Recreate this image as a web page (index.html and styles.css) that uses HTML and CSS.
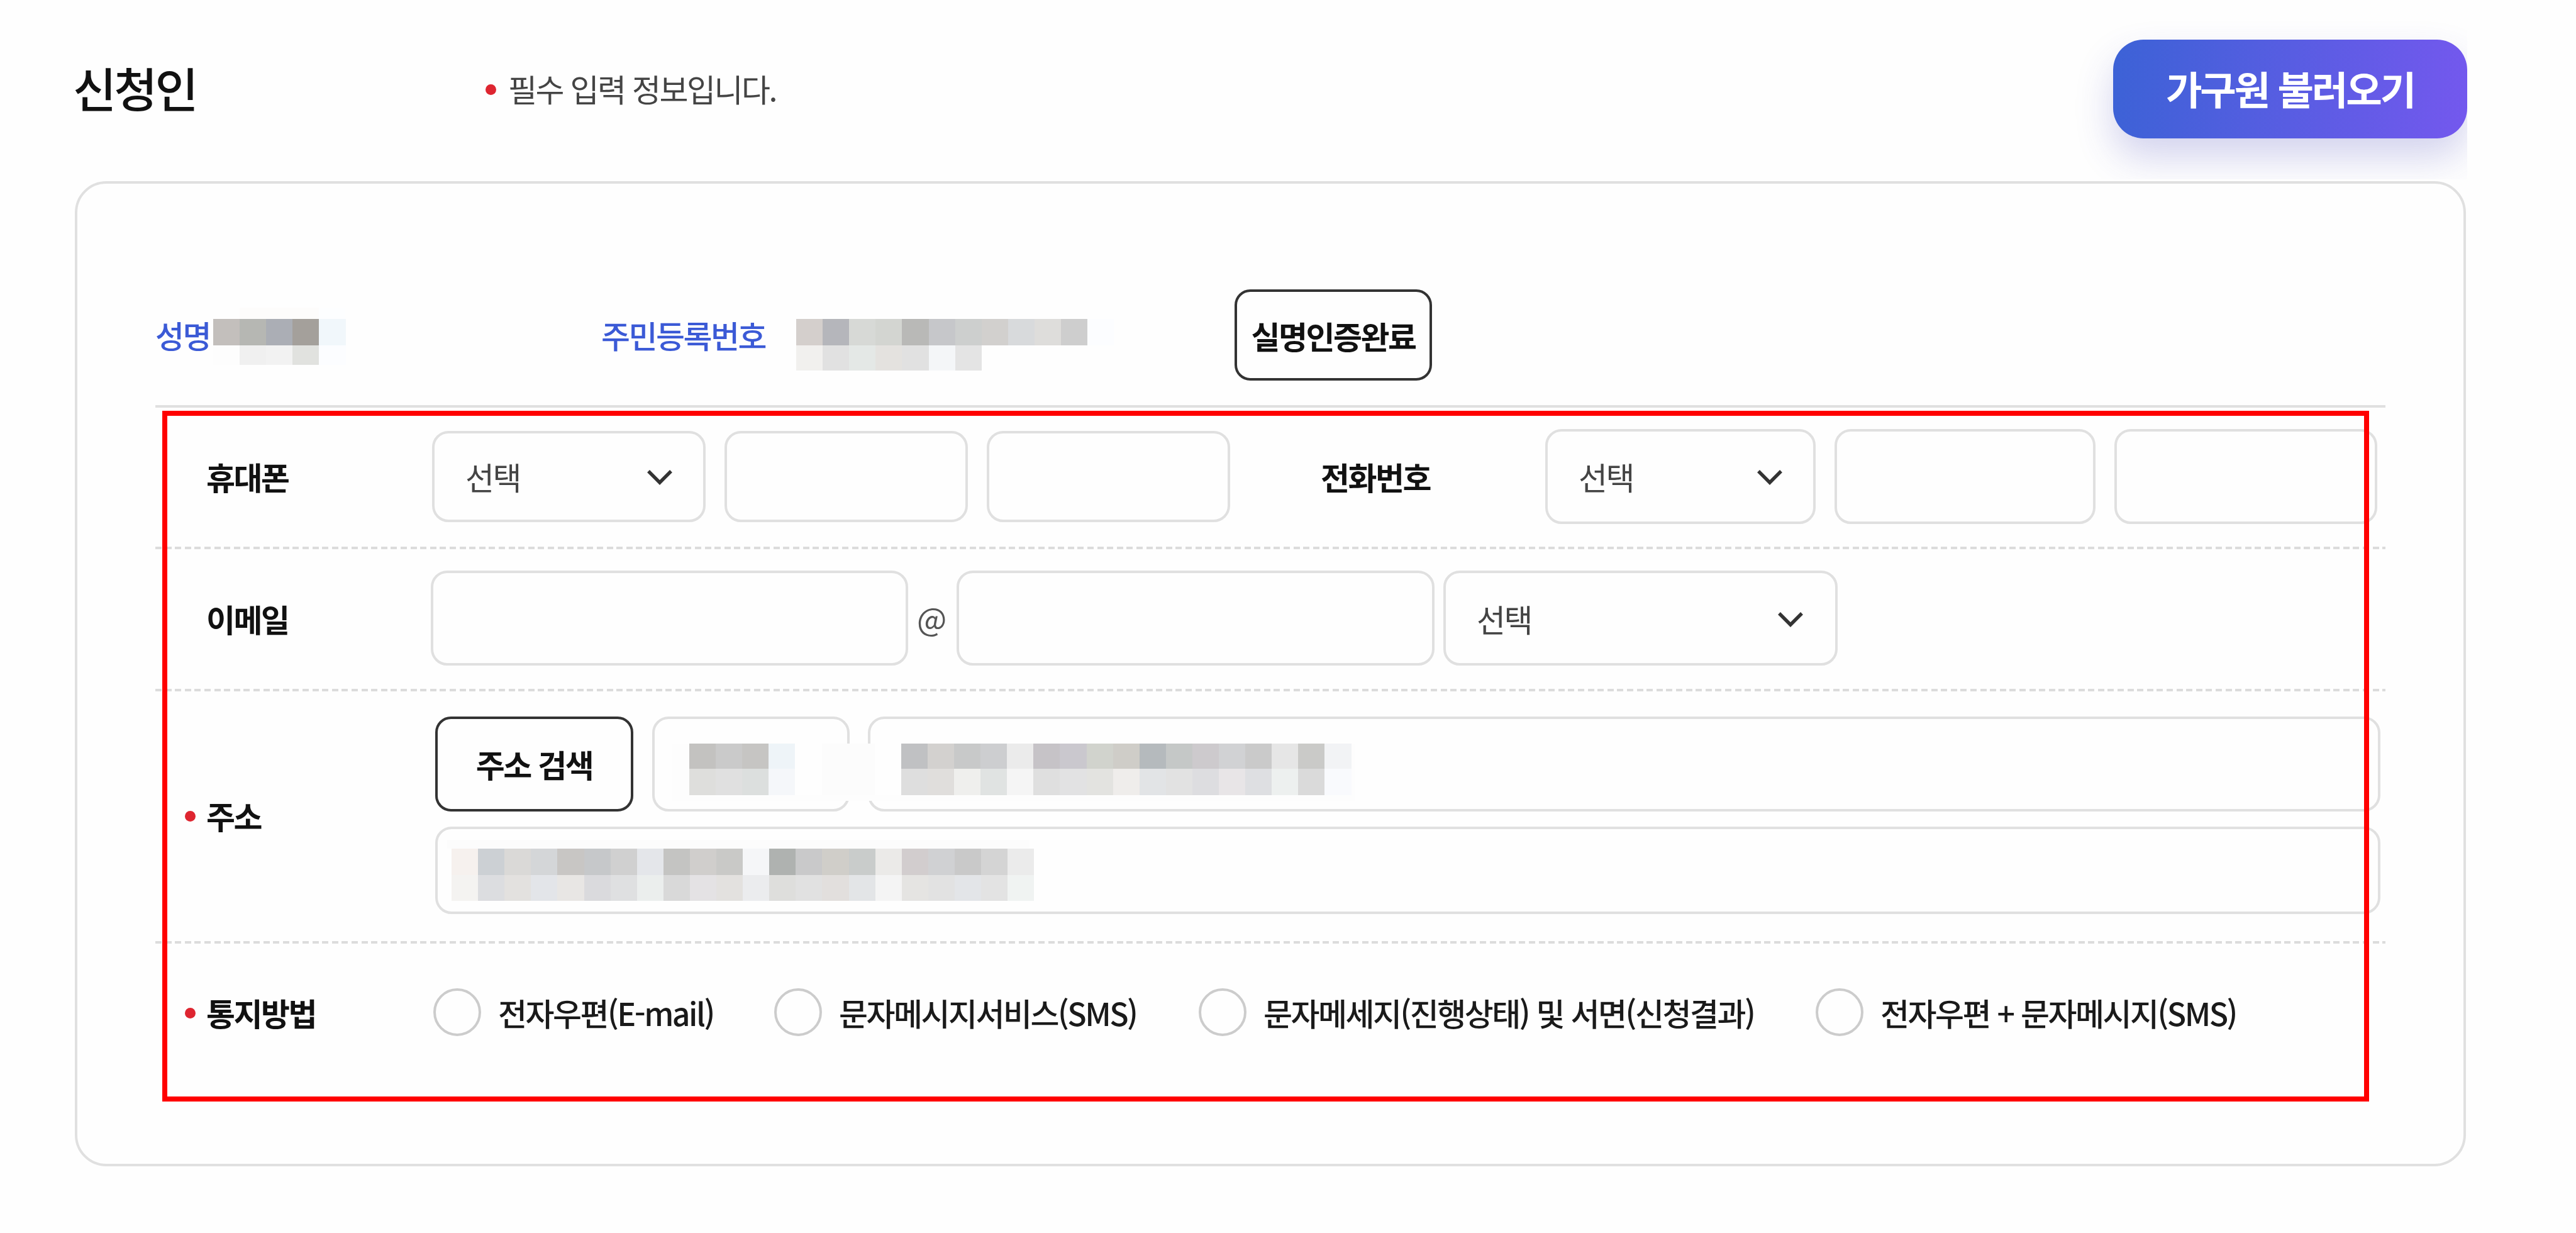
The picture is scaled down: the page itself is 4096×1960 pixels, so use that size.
FILE: index.html
```html
<!DOCTYPE html>
<html lang="ko">
<head>
    <meta charset="UTF-8">
    <meta name="viewport" content="width=device-width, initial-scale=1.0">
    <title>신청인</title>
    <link rel="stylesheet" href="styles.css">
</head>
<body>
    <header class="header">
        <h1>신청인</h1>
        <p class="notice">필수 입력 정보입니다.</p>
        <button class="load-button" type="button">가구원 불러오기</button>
    </header>

    <main class="card">
        <div class="row identity">
            <div class="name-cell">성명<svg class="mosaic" data-mosaic="name"></svg></div>
            <div class="id-cell">주민등록번호<svg class="mosaic" data-mosaic="id"></svg></div>
            <button class="line-button" type="button">실명인증완료</button>
        </div>

        <div class="row phone">
            <div class="label">휴대폰</div>
            <div class="fields mobile">
                <div class="box select">선택<svg class="chevron" viewBox="0 0 44 28"><path d="M4 4l18 18L40 4"/></svg></div>
                <div class="box"></div>
                <div class="box"></div>
            </div>
            <div class="label tel-label">전화번호</div>
            <div class="fields tel">
                <div class="box select">선택<svg class="chevron" viewBox="0 0 44 28"><path d="M4 4l18 18L40 4"/></svg></div>
                <div class="box"></div>
                <div class="box"></div>
            </div>
        </div>

        <div class="row email">
            <div class="label">이메일</div>
            <div class="fields mail">
                <div class="box"></div>
                <span class="at">@</span>
                <div class="box"></div>
                <div class="box select">선택<svg class="chevron" viewBox="0 0 44 28"><path d="M4 4l18 18L40 4"/></svg></div>
            </div>
        </div>

        <div class="row address">
            <div class="label required">주소</div>
            <div class="address-fields">
                <div class="fields address-line">
                    <button class="line-button" type="button">주소 검색</button>
                    <div class="box"></div>
                    <div class="box"></div>
                    <svg class="mosaic" data-mosaic="address"></svg>
                </div>
                <div class="box detail"><svg class="mosaic" data-mosaic="detail"></svg></div>
            </div>
        </div>

        <div class="row notify">
            <div class="label required">통지방법</div>
            <div class="radios">
                <label class="radio"><span class="circle"></span>전자우편(E-mail)</label>
                <label class="radio"><span class="circle"></span>문자메시지서비스(SMS)</label>
                <label class="radio"><span class="circle"></span>문자메세지(진행상태) 및 서면(신청결과)</label>
                <label class="radio"><span class="circle"></span>전자우편 + 문자메시지(SMS)</label>
            </div>
        </div>

        <div class="highlight"></div>
    </main>

    <script src="mosaic.js"></script>
</body>
</html>
```
FILE: styles.css
```css
* {
    box-sizing: border-box;
}
body {
    margin: 0;
    background: #fefefe;
    color: #111;
    font-family: "Noto Sans CJK KR", "Noto Sans", sans-serif;
    font-size: 50px;
    line-height: 72px;
    letter-spacing: -2.5px;
    white-space: nowrap;
}
button {
    font: inherit;
    letter-spacing: inherit;
    padding: 0;
}

/* header */
.header {
    width: 3923px;
    height: 285px;
    padding: 63px 0 65px 116px;
    display: flex;
    align-items: center;
    overflow: hidden;
}
.header h1 {
    width: 692px;
    margin: 0;
    padding-bottom: 5px;
    font-size: 75px;
    font-weight: 500;
    letter-spacing: -3.75px;
}
.notice {
    position: relative;
    margin: 0;
    padding-bottom: 3px;
    color: #444;
}
.notice::before,
.required::before {
    content: "";
    position: absolute;
    width: 17px;
    height: 17px;
    border-radius: 50%;
    background: #de2530;
}
.notice::before {
    left: -36px;
    top: 30px;
}
.load-button {
    width: 563px;
    height: 157px;
    margin-left: auto;
    padding-bottom: 4px;
    border: none;
    border-radius: 48px;
    background: linear-gradient(95deg, #3c62d6, #7458ee);
    box-shadow: 0 30px 60px rgba(60, 60, 180, 0.22);
    color: #fff;
    font-size: 62.5px;
    font-weight: 700;
    letter-spacing: -3.1px;
}

/* card */
.card {
    position: relative;
    width: 3802px;
    height: 1566px;
    margin: 3px 0 0 119px;
    padding: 0 124px;
    border: 4px solid #e0e0e0;
    border-radius: 50px;
}
.row {
    display: grid;
    grid-template-columns: 440px 1fr;
    align-items: center;
}
.identity {
    grid-template-columns: 709px 1007px 314px;
    height: 356px;
    padding: 168px 0 39px;
    border-bottom: 4px solid #e0e0e0;
    color: #3b5ad6;
    font-weight: 500;
}
.name-cell,
.id-cell {
    position: relative;
    padding-bottom: 1px;
}
.line-button {
    height: 145px;
    border: 4px solid #333;
    border-radius: 25px;
    background: #fefefe;
    color: #111;
    font-weight: 700;
}
.phone,
.email,
.address {
    background: repeating-linear-gradient(90deg, #dcdcdc 0 10px, transparent 10px 15.6px) bottom / 100% 4px no-repeat;
}
.phone {
    grid-template-columns: 440px 1413px 357px 1fr;
    height: 225px;
    padding-bottom: 7px;
}
.email {
    height: 226px;
    padding-bottom: 7px;
}
.address {
    height: 401px;
    padding-bottom: 8px;
}
.notify {
    height: 217px;
}
.label {
    position: relative;
    padding-left: 81px;
    font-weight: 700;
}
.tel-label {
    padding-left: 0;
}
.required::before {
    left: 47px;
    top: 29px;
}

/* fields */
.fields {
    display: grid;
    align-items: center;
    column-gap: 30px;
}
.box {
    height: 151px;
    border: 4px solid #e0e0e0;
    border-radius: 26px;
}
.mobile {
    grid-template-columns: 435px 387px 387px;
}
.mobile .box {
    height: 145px;
}
.tel {
    grid-template-columns: 430px 415px 418px;
}
.mail {
    grid-template-columns: 759px 77px 760px 14px 627px;
    column-gap: 0;
    margin-left: -2px;
}
.mail .select {
    grid-column: 5;
    padding-right: 49px;
}
.at {
    padding: 0 4px 4px 0;
    text-align: center;
    color: #555;
}
.select {
    display: flex;
    align-items: center;
    justify-content: space-between;
    padding: 0 47px 0 49px;
    color: #444;
}
.chevron {
    width: 44px;
    height: 28px;
    margin-top: 4px;
    fill: none;
    stroke: #333;
    stroke-width: 5.5;
}
.address-fields {
    display: grid;
    row-gap: 24px;
    margin-left: 5px;
    width: 3093px;
}
.address-line {
    position: relative;
    grid-template-columns: 315px 314px 2405px;
    column-gap: 29.5px;
}
.address-line .line-button {
    height: 151px;
}
.detail {
    position: relative;
    height: 139px;
}
.radios {
    display: grid;
    grid-template-columns: 542px 675px 981px auto;
    justify-content: start;
    margin-left: 2px;
}
.radio {
    display: flex;
    align-items: center;
    gap: 27px;
    color: #1a1a1a;
    font-weight: 500;
}
.circle {
    width: 76px;
    height: 76px;
    border: 4px solid #ccc;
    border-radius: 50%;
}

/* pixelated personal data */
.mosaic {
    position: absolute;
    shape-rendering: crispEdges;
}
.name-cell .mosaic {
    left: 92px;
    top: -7px;
}
.id-cell .mosaic {
    left: 310px;
    top: -7px;
}
.address-line .mosaic {
    left: 376px;
    top: 43px;
}
.detail .mosaic {
    left: 15px;
    top: 17px;
}

.highlight {
    position: absolute;
    left: 135px;
    top: 361px;
    width: 3509px;
    height: 1098px;
    border: 8px solid #f00;
}
```
FILE: mosaic.js
```js
// each run: x, y, height, one colour per 42px block
const BLOCK = 42.1;
const mosaics = {
    name: {
        width: 211, height: 92,
        runs: [
            [42, 0, 18, 'fdfcfb fdfcfb fdfcfb fdfeff'],
            [0, 18, 42, 'c3bfbc b6b7b3 abaeb5 a4a09b f1f7fb'],
            [0, 60, 31, 'fdfdfd f0f0f0 f2f2f2 e1e2df fcfdff']
        ]
    },
    id: {
        width: 506, height: 100,
        runs: [
            [0, 18, 42, 'd4cfcc b5b6bb d7d9d6 d3d5d1 b9b9b7 c6c7ca cdcfce d2d0ce d8dadc dedddb cecece fcfdff'],
            [0, 60, 40, 'f1f0ee e1e1e1 e4e8e6 e4e2df e1e1e1 f4f6f8 e4e4e4']
        ]
    },
    address: {
        width: 1086, height: 91, base: '#fdfdfd',
        runs: [
            [28, 0, 40, 'c3c2c0 cacaca c6c5c3 eef4f8 fefefe fcfcfc fcfcfc fefefe c0c1c3 d3d1cf c8c9c9 cdced0 ebebeb c6c3c7 cac8ce d1d3cd cfcdc8 b5babd c5c8c7 cdcacd d1d2d4 cacaca e6e6e6 cacac8 f2f3f5'],
            [28, 40, 42, 'dededc e0e0e0 dcdfde f5f7fa fefefe fcfcfc fcfcfc fefefe dedede e0dedc efefed e0e3e2 f5f5f5 dfdfdf e2e2e3 e3e3e0 efedeb e2e4e6 e2e2e2 dddde0 e8e5e7 dedfe2 edf0ef dadada f9fafd']
        ]
    },
    detail: {
        width: 962, height: 98,
        runs: [
            [0, 0, 14, 'fcfcfc '.repeat(22).trim()],
            [7, 14, 42, 'f6f1ee ccd0d4 dad9d7 d4d6d8 c8c6c4 c6c8ca d0d0d0 e4e6ea c4c4c2 d0cecc c9c9c7 f5f6f8 afb2b0 c9c9ca d0cec9 c9cccb ebeae8 d2cdce d0d1d3 c9c9c9 d4d4d4 ebebeb'],
            [7, 56, 41, 'f4f3f1 dcdde0 e3e1df e3e5e9 e8e6e4 dadadd dfe0e1 ebeeed d9d9d9 e4e2e4 e3e1df ebecee dededc e1e1e1 e2dfdd e3e5e7 f4f4f4 e5e4e2 e2e2e2 e3e5e8 e3e3e3 f0f3f2']
        ]
    }
};

document.querySelectorAll('[data-mosaic]').forEach(svg => {
    const m = mosaics[svg.dataset.mosaic];
    svg.setAttribute('width', m.width);
    svg.setAttribute('height', m.height);
    let html = m.base ? `<rect width="${m.width}" height="${m.height}" fill="${m.base}"/>` : '';
    m.runs.forEach(([x, y, h, colors]) => {
        colors.split(' ').forEach((c, i) => {
            html += `<rect x="${x + i * BLOCK}" y="${y}" width="${BLOCK}" height="${h}" fill="#${c}"/>`;
        });
    });
    svg.innerHTML = html;
});
```
